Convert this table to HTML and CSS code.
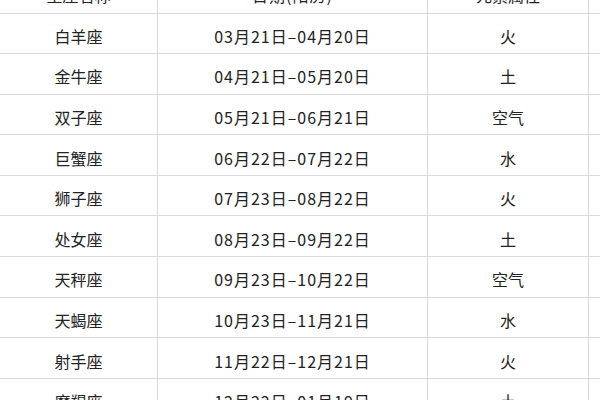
FILE: index.html
```html
<!DOCTYPE html>
<html lang="zh">
<head>
<meta charset="utf-8">
<link rel="stylesheet" href="styles.css">
</head>
<body>
<table class="zodiac">
  <colgroup>
    <col class="c1"><col class="c2"><col class="c3"><col class="c4">
  </colgroup>
  <tr class="head"><td>星座名称</td><td class="date">日期(阳历)</td><td>元素属性</td><td></td></tr>
  <tr><td>白羊座</td><td class="date">03月21日–04月20日</td><td>火</td><td></td></tr>
  <tr><td>金牛座</td><td class="date">04月21日–05月20日</td><td>土</td><td></td></tr>
  <tr><td>双子座</td><td class="date">05月21日–06月21日</td><td>空气</td><td></td></tr>
  <tr><td>巨蟹座</td><td class="date">06月22日–07月22日</td><td>水</td><td></td></tr>
  <tr><td>狮子座</td><td class="date">07月23日–08月22日</td><td>火</td><td></td></tr>
  <tr><td>处女座</td><td class="date">08月23日–09月22日</td><td>土</td><td></td></tr>
  <tr><td>天秤座</td><td class="date">09月23日–10月22日</td><td>空气</td><td></td></tr>
  <tr><td>天蝎座</td><td class="date">10月23日–11月21日</td><td>水</td><td></td></tr>
  <tr><td>射手座</td><td class="date">11月22日–12月21日</td><td>火</td><td></td></tr>
  <tr><td>摩羯座</td><td class="date">12月22日–01月19日</td><td>土</td><td></td></tr>
</table>
</body>
</html>
```

FILE: styles.css
```css
html, body {
  margin: 0;
  padding: 0;
  background: #ffffff;
  overflow: hidden;
}
body {
  width: 600px;
  height: 400px;
  font-family: "Noto Sans CJK SC", "Noto Sans", sans-serif;
  color: #222222;
}
.zodiac {
  border-collapse: collapse;
  table-layout: fixed;
  width: 640px;
  margin-top: -27.6px;
  margin-left: -1px;
}
.c1 { width: 158px; }
.c2 { width: 270px; }
.c3 { width: 161px; }
.c4 { width: 51px; }
.zodiac td {
  border: 1px solid #d9d9d9;
  height: 40.6px;
  padding: 5px 0 0 0;
  box-sizing: border-box;
  text-align: center;
  vertical-align: middle;
  font-size: 16px;
  line-height: 20px;
  white-space: nowrap;
}
.zodiac td.date {
  letter-spacing: 1px;
}
.zodiac tr:first-child td {
  border-top: none;
}
```
